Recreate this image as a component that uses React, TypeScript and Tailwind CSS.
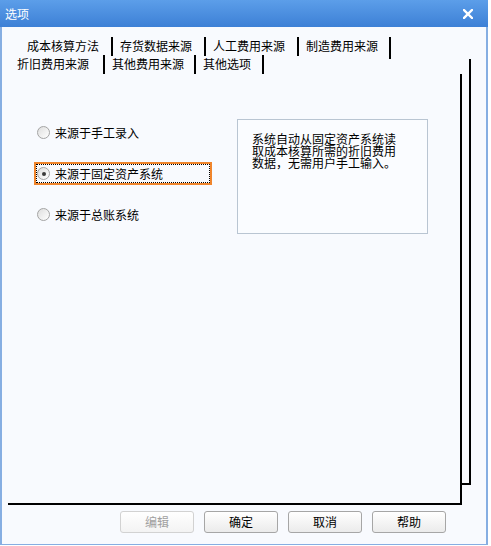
import React from "react";

const rowOne = ["成本核算方法", "存货数据来源", "人工费用来源", "制造费用来源"];
const rowTwo = [
  { label: "折旧费用来源", w: "w-[95px]" },
  { label: "其他费用来源", w: "w-[91px]" },
  { label: "其他选项", w: "w-[68px]" },
];
const desc = ["系统自动从固定资产系统读", "取成本核算所需的折旧费用", "数据，无需用户手工输入。"];

function Radio({ label, checked }: { label: string; checked?: boolean }) {
  return (
    <div
      className={`h-[23px] w-[178px] border-2 ${
        checked ? "border-[#f0852c]" : "border-transparent"
      }`}
    >
      <div
        className={`flex h-full items-center gap-[5px] border border-dotted ${
          checked ? "border-black" : "border-transparent"
        }`}
      >
        <span className="flex h-[13px] w-[13px] items-center justify-center rounded-full border border-[#a4a4a4] bg-linear-to-br from-[#dedede] to-white">
          {checked && <span className="h-[4px] w-[4px] rounded-full bg-[#3a3a3a]" />}
        </span>
        <span className="leading-none">{label}</span>
      </div>
    </div>
  );
}

function Btn({ label, disabled }: { label: string; disabled?: boolean }) {
  return (
    <button
      className={`h-[22px] w-[74px] rounded-[3px] border bg-linear-to-b text-[12px] leading-none ${
        disabled
          ? "border-[#d2d2d2] from-white to-[#f3f3f3] text-[#a0a0a0]"
          : "border-[#a6a6a6] from-white to-[#ebebeb] text-black"
      }`}
    >
      {label}
    </button>
  );
}

export default function App() {
  return (
    <div className="h-[546px] w-[491px] bg-white font-['Noto_Sans_CJK_SC','Liberation_Sans',sans-serif] text-[12px] text-black">
      <div className="flex h-[545px] w-[488px] flex-col border-x-2 border-b border-[#86aee2] bg-[#f8fafe]">
        {/* title bar */}
        <div className="-mx-[2px] flex h-[27px] shrink-0 items-center justify-between bg-linear-to-b from-[#5c9ee9] to-[#3d80d6] pl-[5px] pr-[15px] text-white">
          <span className="text-[12px] leading-none">选项</span>
          <svg width="10" height="10" viewBox="0 0 10 10">
            <path d="M1 1 L9 9 M9 1 L1 9" stroke="white" strokeWidth="2.4" strokeLinecap="square" />
          </svg>
        </div>

        <div className="relative flex-1">
          {/* back page of the tab stack */}
          <div className="absolute left-[6px] top-[32px] h-[426px] w-[463px] border-r-2 border-b-2 border-black" />

          {/* tabs */}
          <div className="relative pt-[10px]">
            <div className="flex h-[19px] items-start pl-[18px]">
              {rowOne.map((t, i) => (
                <div
                  key={t}
                  className={`flex shrink-0 border-r-2 border-black pl-[7px] pt-[3px] ${
                    i === 3 ? "h-[22px] w-[92px]" : "h-[19px] w-[93px]"
                  }`}
                >
                  <span className="leading-none">{t}</span>
                </div>
              ))}
            </div>
            <div className="-mt-[1px] flex pl-[8px]">
              {rowTwo.map((t) => (
                <div
                  key={t.label}
                  className={`flex h-[19px] border-r-2 border-black pl-[7px] pt-[3px] ${t.w}`}
                >
                  <span className="leading-none">{t.label}</span>
                </div>
              ))}
            </div>
          </div>

          {/* front page */}
          <div className="relative ml-[6px] h-[431px] w-[454px] border-r-2 border-b-2 border-black bg-[#f8fafe]">
            <div className="flex pt-[45px]">
              <div className="flex flex-col gap-[18px] pl-[26px] pt-[2px]">
                <Radio label="来源于手工录入" />
                <Radio label="来源于固定资产系统" checked />
                <Radio label="来源于总账系统" />
              </div>
              <div className="ml-[25px] h-[115px] w-[191px] border border-[#b9c5d2] bg-[#fafcff] pl-[14px] pt-[13px]">
                {desc.map((line) => (
                  <p key={line} className="text-[12px] leading-[12px]">
                    {line}
                  </p>
                ))}
              </div>
            </div>
          </div>

          {/* buttons */}
          <div className="mt-[6px] flex gap-[10px] pl-[118px]">
            <Btn label="编辑" disabled />
            <Btn label="确定" />
            <Btn label="取消" />
            <Btn label="帮助" />
          </div>
        </div>
      </div>
    </div>
  );
}
